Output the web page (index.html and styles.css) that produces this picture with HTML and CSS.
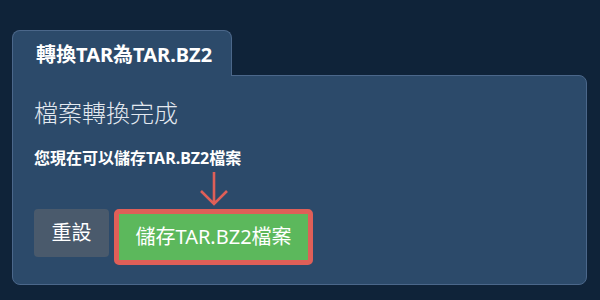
FILE: index.html
```html
<!DOCTYPE html>
<html>
<head>
    <title>轉換TAR為TAR.BZ2</title>
    <link rel="stylesheet" href="styles.css">
</head>
<body>
    <div class="converter">
        <!-- 標籤 -->
        <div class="tab">轉換TAR為TAR.BZ2</div>

        <!-- 結果面板 -->
        <div class="panel">
            <h2 class="done-title">檔案轉換完成</h2>
            <p class="done-text">您現在可以儲存TAR.BZ2檔案</p>

            <div class="actions">
                <button class="btn btn-reset">重設</button>
                <div class="save-wrap">
                    <svg class="hint-arrow" width="30" height="36" viewBox="0 0 30 36">
                        <path d="M15 1 V33 M2 20 L15 33 L28 20" fill="none" stroke="#df5f58" stroke-width="2.6"/>
                    </svg>
                    <button class="btn btn-save">儲存TAR.BZ2檔案</button>
                </div>
            </div>
        </div>
    </div>
</body>
</html>
```

FILE: styles.css
```css
:root {
    --page-bg: #0f2339;
    --panel-bg: #2c4a6a;
    --panel-border: #4b678a;
    --accent-red: #df5f58;
}

body {
    margin: 0;
    background: var(--page-bg);
    font-family: "Noto Sans", "Noto Sans CJK TC", sans-serif;
    color: #fff;
}

.converter {
    padding: 30px 13px 0 12px;
}

.tab {
    width: 220px;
    height: 46px;
    box-sizing: border-box;
    padding: 12px 0 0 23px;
    background: var(--panel-bg);
    border: 1px solid var(--panel-border);
    border-bottom: none;
    border-radius: 8px 8px 0 0;
    font-size: 20px;
    font-weight: 700;
    line-height: 24px;
    position: relative;
    z-index: 1;
    margin-bottom: -1px;
}

.panel {
    height: 210px;
    box-sizing: border-box;
    padding: 21px 21px 0;
    background: var(--panel-bg);
    border: 1px solid var(--panel-border);
    border-radius: 0 8px 8px 8px;
}

.done-title {
    margin: 0;
    font-size: 24px;
    font-weight: 300;
    line-height: 32px;
    color: #e3e9f0;
}

.done-text {
    margin: 18px 0 0;
    font-size: 16px;
    font-weight: 700;
    line-height: 22px;
}

.actions {
    display: flex;
    align-items: flex-start;
    gap: 5px;
    margin-top: 40px;
}

.btn {
    border: none;
    border-radius: 4px;
    color: #fff;
    font-family: inherit;
    font-size: 20px;
    line-height: 28px;
    padding: 0 16px;
    cursor: pointer;
}

.btn-reset {
    height: 48px;
    width: 75px;
    background: #4a5a6c;
}

.save-wrap {
    position: relative;
}

.btn-save {
    height: 56px;
    width: 199px;
    background: #5cb85c;
    border: 5px solid var(--accent-red);
    border-radius: 5px;
}

.hint-arrow {
    position: absolute;
    left: 85px;
    top: -38px;
}
```
